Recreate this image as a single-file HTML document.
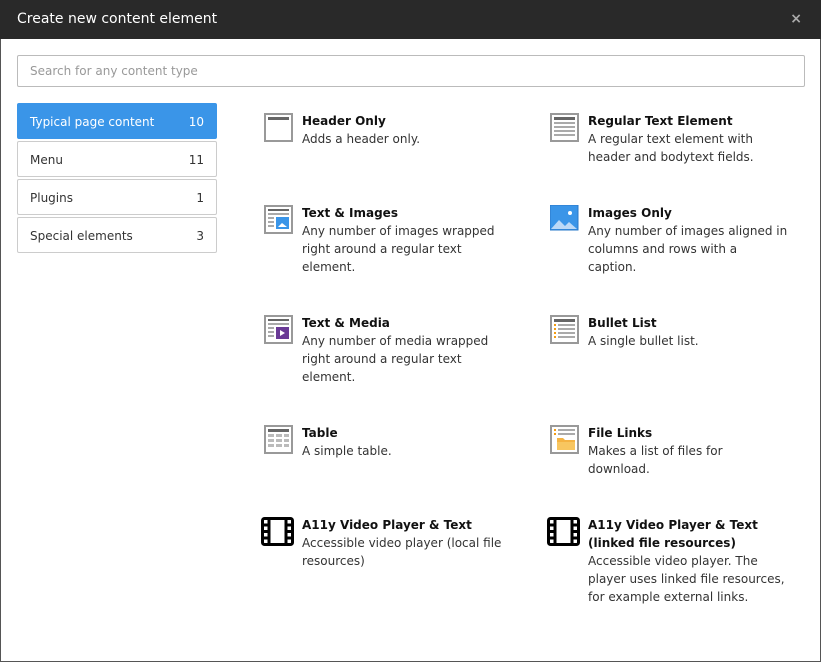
<!DOCTYPE html>
<html><head><style>
*{box-sizing:border-box;margin:0;padding:0}
body{width:821px;height:662px;background:#fff;font-family:"DejaVu Sans",Verdana,sans-serif;font-size:12px;color:#333;position:relative;overflow:hidden}
.frame{position:absolute;left:0;top:0;width:821px;height:662px;border:1px solid #555}
.hd{position:absolute;left:0;top:0;width:821px;height:39px;background:#292929;color:#fff;font-size:14px;padding:11px 17px}
.hd .x{position:absolute;right:19px;top:11px;color:#aaa;font-size:14px;font-weight:bold}
.search{position:absolute;left:17px;top:55px;width:788px;height:32px;border:1px solid #bbb;border-radius:2px;padding:8px 12px;color:#999}
.tab{position:absolute;left:17px;width:200px;height:36px;border:1px solid #ccc;border-radius:2px;padding:11px 12px;color:#333}
.tab span{position:absolute;right:12px;top:11px}
.tab.a{background:#3a95e8;border-color:#3a95e8;color:#fff}
.it{position:absolute;width:212px;line-height:18px}
.r{width:200px}
.it svg{position:absolute;left:-38px;top:0}
.it b{display:block;color:#111}
</style></head><body>
<div class="frame"></div>
<div class="hd">Create new content element<span class="x">×</span></div>
<div class="search">Search for any content type</div>
<div class="tab a" style="top:103px">Typical page content<span>10</span></div>
<div class="tab" style="top:141px">Menu<span>11</span></div>
<div class="tab" style="top:179px">Plugins<span>1</span></div>
<div class="tab" style="top:217px">Special elements<span>3</span></div>

<div class="it" style="left:302px;top:112px"><svg width="30" height="30" viewBox="0 0 30 30" style="top:1px"><rect x="1" y="1" width="27" height="27" fill="#fff" stroke="#999" stroke-width="2"/><rect x="4" y="4" width="21" height="3" fill="#666"/></svg><b>Header Only</b>Adds a header only.</div>
<div class="it r" style="left:588px;top:112px"><svg width="30" height="30" viewBox="0 0 30 30" style="top:1px"><rect x="1" y="1" width="27" height="27" fill="#fff" stroke="#999" stroke-width="2"/><rect x="4" y="4" width="21" height="3" fill="#666"/><g fill="#aaa"><rect x="4" y="9" width="21" height="2"/><rect x="4" y="13" width="21" height="2"/><rect x="4" y="17" width="21" height="2"/><rect x="4" y="21" width="21" height="2"/></g></svg><b>Regular Text Element</b>A regular text element with header and bodytext fields.</div>

<div class="it" style="left:302px;top:204px"><svg width="30" height="30" viewBox="0 0 30 30" style="top:1px"><rect x="1" y="1" width="27" height="27" fill="#fff" stroke="#999" stroke-width="2"/><rect x="4" y="4" width="21" height="2" fill="#666"/><g fill="#aaa"><rect x="4" y="8" width="21" height="2"/><rect x="4" y="12" width="6" height="2"/><rect x="4" y="16" width="6" height="2"/><rect x="4" y="20" width="6" height="2"/></g><rect x="12" y="12" width="13" height="12" fill="#3a95e8"/><path d="M14 22l4-4 5 4z" fill="#fff"/></svg><b>Text &amp; Images</b>Any number of images wrapped right around a regular text element.</div>
<div class="it r" style="left:588px;top:204px"><svg width="30" height="30" viewBox="0 0 30 30" style="top:1px"><rect x="0" y="0" width="28" height="25" fill="#3a95e8" stroke="#2a78c8" stroke-width="1"/><path d="M1 24l8-9 6 6 4-4 8 7z" fill="#bcd9f7"/><circle cx="20" cy="8" r="2" fill="#fff"/></svg><b>Images Only</b>Any number of images aligned in columns and rows with a caption.</div>

<div class="it" style="left:302px;top:314px"><svg width="30" height="30" viewBox="0 0 30 30" style="top:1px"><rect x="1" y="1" width="27" height="27" fill="#fff" stroke="#999" stroke-width="2"/><rect x="4" y="4" width="21" height="2" fill="#666"/><g fill="#aaa"><rect x="4" y="8" width="21" height="2"/><rect x="4" y="12" width="6" height="2"/><rect x="4" y="16" width="6" height="2"/><rect x="4" y="20" width="6" height="2"/></g><rect x="12" y="12" width="13" height="12" fill="#6a3a96"/><path d="M16 15l5 3-5 3z" fill="#fff"/></svg><b>Text &amp; Media</b>Any number of media wrapped right around a regular text element.</div>
<div class="it r" style="left:588px;top:314px"><svg width="30" height="30" viewBox="0 0 30 30" style="top:1px"><rect x="1" y="1" width="27" height="27" fill="#fff" stroke="#999" stroke-width="2"/><rect x="4" y="4" width="21" height="3" fill="#666"/><g fill="#f39c12"><rect x="4" y="9" width="2" height="2"/><rect x="4" y="13" width="2" height="2"/><rect x="4" y="17" width="2" height="2"/><rect x="4" y="21" width="2" height="2"/></g><g fill="#aaa"><rect x="8" y="9" width="17" height="2"/><rect x="8" y="13" width="17" height="2"/><rect x="8" y="17" width="17" height="2"/><rect x="8" y="21" width="17" height="2"/></g></svg><b>Bullet List</b>A single bullet list.</div>

<div class="it" style="left:302px;top:424px"><svg width="30" height="30" viewBox="0 0 30 30" style="top:1px"><rect x="1" y="1" width="27" height="27" fill="#fff" stroke="#999" stroke-width="2"/><rect x="4" y="4" width="21" height="3" fill="#666"/><g fill="#bbb"><rect x="4" y="9" width="6" height="3"/><rect x="12" y="9" width="6" height="3"/><rect x="20" y="9" width="5" height="3"/><rect x="4" y="14" width="6" height="3"/><rect x="12" y="14" width="6" height="3"/><rect x="20" y="14" width="5" height="3"/><rect x="4" y="19" width="6" height="3"/><rect x="12" y="19" width="6" height="3"/><rect x="20" y="19" width="5" height="3"/></g></svg><b>Table</b>A simple table.</div>
<div class="it r" style="left:588px;top:424px"><svg width="30" height="30" viewBox="0 0 30 30" style="top:1px"><rect x="1" y="1" width="27" height="27" fill="#fff" stroke="#999" stroke-width="2"/><g fill="#f39c12"><rect x="4" y="4" width="2" height="2"/><rect x="4" y="8" width="2" height="2"/></g><g fill="#aaa"><rect x="8" y="4" width="17" height="2"/><rect x="8" y="8" width="17" height="2"/></g><path d="M7 13h6l2 2h10v10H7z" fill="#f5b342"/><rect x="7" y="17" width="18" height="8" fill="#f8c660"/></svg><b>File Links</b>Makes a list of files for download.</div>

<div class="it" style="left:302px;top:516px"><svg width="34" height="30" viewBox="0 0 34 30" style="left:-41px;top:1px"><rect x="1.5" y="1.5" width="30" height="26" rx="2" fill="#fff" stroke="#000" stroke-width="3"/><path d="M8 1v28M25 1v28M1 8h7M1 14.5h7M1 21h7M25 8h7M25 14.5h7M25 21h7" stroke="#000" stroke-width="3"/></svg><b>A11y Video Player &amp; Text</b>Accessible video player (local file resources)</div>
<div class="it r" style="left:588px;top:516px"><svg width="34" height="30" viewBox="0 0 34 30" style="left:-41px;top:1px"><rect x="1.5" y="1.5" width="30" height="26" rx="2" fill="#fff" stroke="#000" stroke-width="3"/><path d="M8 1v28M25 1v28M1 8h7M1 14.5h7M1 21h7M25 8h7M25 14.5h7M25 21h7" stroke="#000" stroke-width="3"/></svg><b>A11y Video Player &amp; Text (linked file resources)</b>Accessible video player. The player uses linked file resources, for example external links.</div>
</body></html>
